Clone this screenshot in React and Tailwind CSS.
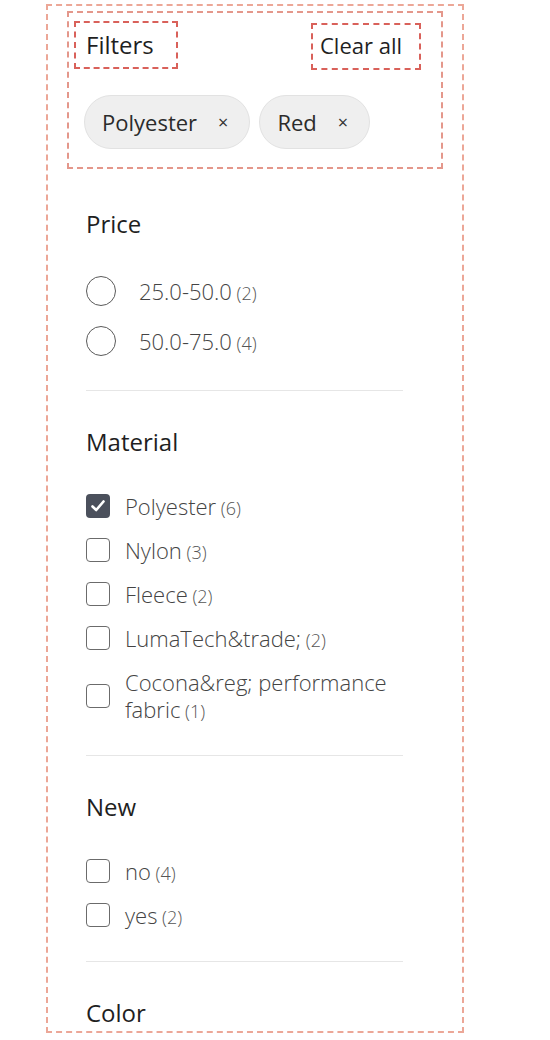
import { useState } from "react";

const price = [
  { label: "25.0-50.0", count: 2 },
  { label: "50.0-75.0", count: 4 },
];

const material = [
  { label: "Polyester", count: 6, checked: true },
  { label: "Nylon", count: 3 },
  { label: "Fleece", count: 2 },
  { label: "LumaTech&trade;", count: 2 },
  { label: "Cocona&reg; performance fabric", count: 1 },
];

const fresh = [
  { label: "no", count: 4 },
  { label: "yes", count: 2 },
];

function Checkbox({ checked }) {
  return (
    <span
      className={
        checked
          ? "w-[24px] h-[24px] shrink-0 rounded-[4px] bg-[#4b505c] flex items-center justify-center"
          : "w-[24px] h-[24px] shrink-0 rounded-[4px] border-[1.5px] border-[#6b6b6b] bg-white"
      }
    >
      {checked && (
        <svg width="16" height="16" viewBox="0 0 16 16">
          <path d="M2.5 8.5 L6.2 12 L13.5 3.5" fill="none" stroke="white" strokeWidth="2.6" strokeLinecap="round" strokeLinejoin="round" />
        </svg>
      )}
    </span>
  );
}

function Label({ label, count, size }) {
  return (
    <span className={size + " leading-[27px] font-light text-[#444]"}>
      {label}
      <span className="text-[18px] leading-none text-[#555]"> ({count})</span>
    </span>
  );
}

function Section({ title, first, children }) {
  return (
    <section className={(first ? "pt-[39px]" : "pt-[35px]") + " pb-[24px] border-b border-[#e6e6e6]"}>
      <h3 className="text-[24px] leading-[32px] h-[32px] text-[#1f1f1f]">{title}</h3>
      <div className="mt-[26px]">{children}</div>
    </section>
  );
}

export default function App() {
  let [checked] = useState(material);

  return (
    <div className="min-h-screen bg-white font-['Open_Sans',sans-serif] pt-[4px] pl-[46px]">
      <div className="w-[418px] h-[1029px] border-2 border-dashed border-[#eca797] overflow-hidden px-[19px] pt-[5px]">
        <div className="border-2 border-dashed border-[#e4978b] pt-[8px] pb-[18px]">
          <div className="flex justify-between items-start pl-[5px] pr-[20px]">
            <div className="w-[104px] h-[48px] border-2 border-dashed border-[#d9615a] flex items-center pl-[10px] text-[24px] text-[#1f1f1f]">
              Filters
            </div>
            <div className="mt-[2px] w-[110px] h-[47px] border-2 border-dashed border-[#d9615a] flex items-center pl-[7px] pb-[3px] text-[22px] text-[#1f1f1f]">
              Clear all
            </div>
          </div>
          <div className="mt-[25px] flex gap-[9px] pl-[15px]">
            {["Polyester", "Red"].map((c) => (
              <div
                key={c}
                className="h-[54px] rounded-full border-[1.5px] border-[#e2e2e2] bg-[#efefef] pl-[17px] pr-[21px] flex items-center text-[22px] text-[#2b2b2b]"
              >
                {c}
                <span className="ml-[21px] text-[18px] text-[#333]">×</span>
              </div>
            ))}
          </div>
        </div>

        <div className="w-[317px] ml-[19px]">
          <Section title="Price" first>
            {price.map((p) => (
              <div key={p.label} className="h-[50px] flex items-center gap-[23px]">
                <span className="w-[30px] h-[30px] rounded-full border-[1.5px] border-[#5a5a5a]" />
                <Label label={p.label} count={p.count} size="text-[22px]" />
              </div>
            ))}
          </Section>

          <Section title="Material">
            {checked.map((m) => (
              <div key={m.label} className="flex items-center gap-[15px] py-[8.5px]">
                <Checkbox checked={m.checked} />
                <Label label={m.label} count={m.count} size="text-[22px]" />
              </div>
            ))}
          </Section>

          <Section title="New">
            {fresh.map((m) => (
              <div key={m.label} className="flex items-center gap-[15px] py-[8.5px]">
                <Checkbox />
                <Label label={m.label} count={m.count} size="text-[22px]" />
              </div>
            ))}
          </Section>

          <Section title="Color">
            <div className="h-[40px]" />
          </Section>
        </div>
      </div>
    </div>
  );
}
